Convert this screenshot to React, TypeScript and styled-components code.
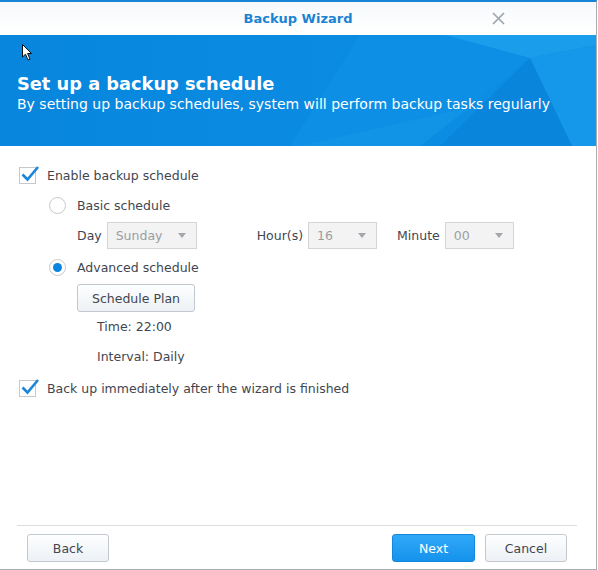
import React from 'react';
import styled, { createGlobalStyle } from 'styled-components';

const GlobalStyle = createGlobalStyle`
    html, body {
        margin: 0;
        padding: 0;
        background: #ffffff;
    }
    body {
        font-family: "DejaVu Sans", Verdana, sans-serif;
        color: #3f4650;
    }
`

const Window = styled.div`
    width: 596px;
    height: 567px;
    border-top: 2px solid #1784d6;
    border-right: 1px solid #a9adb1;
    border-bottom: 1px solid #a9adb1;
    display: flex;
    flex-direction: column;
    background: #ffffff;
`

const TitleBar = styled.div`
    height: 33px;
    display: grid;
    grid-template-columns: 1fr auto 1fr;
    align-items: center;
    background: linear-gradient(#f6f9fc, #ffffff);
`

const Title = styled.div`
    grid-column: 2;
    font-size: 13px;
    font-weight: bold;
    color: #1a84d2;
`

const CloseButton = styled.div`
    justify-self: end;
    margin-right: 91px;
    width: 13px;
    height: 13px;
    display: flex;
`

const Banner = styled.div`
    position: relative;
    height: 111px;
    overflow: hidden;
    background: linear-gradient(90deg, #0886de, #0c8fe4);
    display: flex;
    flex-direction: column;
    justify-content: flex-end;
    padding: 0 17px 32px;
    box-sizing: border-box;
    color: #ffffff;
`

const Facets = styled.svg`
    position: absolute;
    inset: 0;
`

const Cursor = styled.svg`
    position: absolute;
    left: 22px;
    top: 9px;
`

const Heading = styled.h1`
    position: relative;
    margin: 0;
    font-size: 17.8px;
    font-weight: bold;
    line-height: 22px;
`

const Subtitle = styled.p`
    position: relative;
    margin: 0;
    font-size: 14px;
    line-height: 19px;
`

const Content = styled.div`
    flex: 1;
    padding: 14px 0 0 19px;
    display: flex;
    flex-direction: column;
`

const Row = styled.div<{ $h: number; $indent?: number }>`
    height: ${(p) => p.$h}px;
    padding-left: ${(p) => p.$indent ?? 0}px;
    display: flex;
    align-items: center;
    font-size: 12.5px;
`

const CheckBox = styled.span`
    position: relative;
    width: 15px;
    height: 15px;
    border: 1px solid #c4c9ce;
    background: #ffffff;
    margin-right: 11px;
    flex: none;

    svg {
        position: absolute;
        left: 1px;
        top: -3px;
    }
`

const Radio = styled.span<{ $on?: boolean }>`
    width: 15px;
    height: 15px;
    border-radius: 50%;
    border: 1px solid #c4c9ce;
    background: #ffffff;
    margin-right: 11px;
    flex: none;
    display: flex;
    align-items: center;
    justify-content: center;

    &::after {
        content: "";
        width: 9px;
        height: 9px;
        border-radius: 50%;
        background: ${(p) => (p.$on ? '#0a86e0' : 'transparent')};
    }
`

const FieldLabel = styled.span<{ $gap?: number }>`
    margin-right: ${(p) => p.$gap ?? 5}px;
`

const Select = styled.div<{ $w: number; $after?: number }>`
    width: ${(p) => p.$w}px;
    height: 27px;
    border: 1px solid #d3d6d9;
    background: #f3f3f3;
    color: #9a9ea3;
    display: flex;
    align-items: center;
    justify-content: space-between;
    padding: 0 10px 0 8px;
    margin-right: ${(p) => p.$after ?? 0}px;
    box-sizing: border-box;

    &::after {
        content: "";
        border-left: 4.5px solid transparent;
        border-right: 4.5px solid transparent;
        border-top: 5px solid #a3a7ab;
    }
`

const Button = styled.button<{ $primary?: boolean; $w: number }>`
    width: ${(p) => p.$w}px;
    height: 28px;
    border-radius: 3px;
    font-family: "DejaVu Sans", Verdana, sans-serif;
    font-size: 12.5px;
    padding: 0;
    cursor: pointer;
    color: ${(p) => (p.$primary ? '#ffffff' : '#3f4650')};
    border: 1px solid ${(p) => (p.$primary ? '#1287dc' : '#c2c8ce')};
    background: ${(p) =>
        p.$primary
            ? 'linear-gradient(#30a9f8, #1592ec)'
            : 'linear-gradient(#fdfeff, #edf1f5)'};
`

const Footer = styled.div`
    margin: 0 19px 0 17px;
    border-top: 1px solid #dcdfe2;
    padding: 8px 10px 7px 10px;
    display: flex;
    gap: 10px;

    & > :first-child {
        margin-right: auto;
    }
`

function Check() {
    return (
        <CheckBox>
            <svg width="18" height="18" viewBox="0 0 18 18">
                <path d="M1.5 9.5 L6.5 14.5 L17 2" fill="none" stroke="#1b86d9" strokeWidth="2.6" />
            </svg>
        </CheckBox>
    );
}

export default function App() {
    return (
        <>
            <GlobalStyle />
            <Window>
                <TitleBar>
                    <Title>Backup Wizard</Title>
                    <CloseButton>
                        <svg width="13" height="13" viewBox="0 0 13 13">
                            <path d="M1 1 L12 12 M12 1 L1 12" stroke="#9ca3aa" strokeWidth="1.6" />
                        </svg>
                    </CloseButton>
                </TitleBar>
                <Banner>
                    <Facets width="596" height="111" viewBox="0 0 596 111">
                        <polygon points="360,0 445,0 530,23 420,111 290,111" fill="#0d8fe5" />
                        <polygon points="445,0 596,0 596,10 530,23" fill="#1a9eec" />
                        <polygon points="530,23 596,10 596,111 572,111" fill="#1598e9" />
                        <polygon points="530,23 572,111 440,111" fill="#0985dc" />
                        <polygon points="300,111 420,111 470,72" fill="#1193e6" />
                    </Facets>
                    <Cursor width="11" height="17" viewBox="0 0 11 17">
                        <path d="M0.5 0.5 L0.5 13 L3.5 10.2 L6 16 L8 15.1 L5.6 9.5 L9.5 9.5 Z" fill="#ffffff" stroke="#111111" strokeWidth="1" />
                    </Cursor>
                    <Heading>Set up a backup schedule</Heading>
                    <Subtitle>By setting up backup schedules, system will perform backup tasks regularly</Subtitle>
                </Banner>
                <Content>
                    <Row $h={30}>
                        <Check />
                        Enable backup schedule
                    </Row>
                    <Row $h={30} $indent={30}>
                        <Radio />
                        Basic schedule
                    </Row>
                    <Row $h={31} $indent={58}>
                        <FieldLabel>Day</FieldLabel>
                        <Select $w={90} $after={60}>Sunday</Select>
                        <FieldLabel>Hour(s)</FieldLabel>
                        <Select $w={69} $after={20}>16</Select>
                        <FieldLabel $gap={5}>Minute</FieldLabel>
                        <Select $w={69}>00</Select>
                    </Row>
                    <Row $h={32} $indent={30}>
                        <Radio $on />
                        Advanced schedule
                    </Row>
                    <Row $h={30} $indent={58}>
                        <Button $w={118}>Schedule Plan</Button>
                    </Row>
                    <Row $h={26} $indent={78}>Time: 22:00</Row>
                    <Row $h={34} $indent={78}>Interval: Daily</Row>
                    <Row $h={30}>
                        <Check />
                        Back up immediately after the wizard is finished
                    </Row>
                </Content>
                <Footer>
                    <Button $w={82}>Back</Button>
                    <Button $w={83} $primary>Next</Button>
                    <Button $w={82}>Cancel</Button>
                </Footer>
            </Window>
        </>
    );
}
